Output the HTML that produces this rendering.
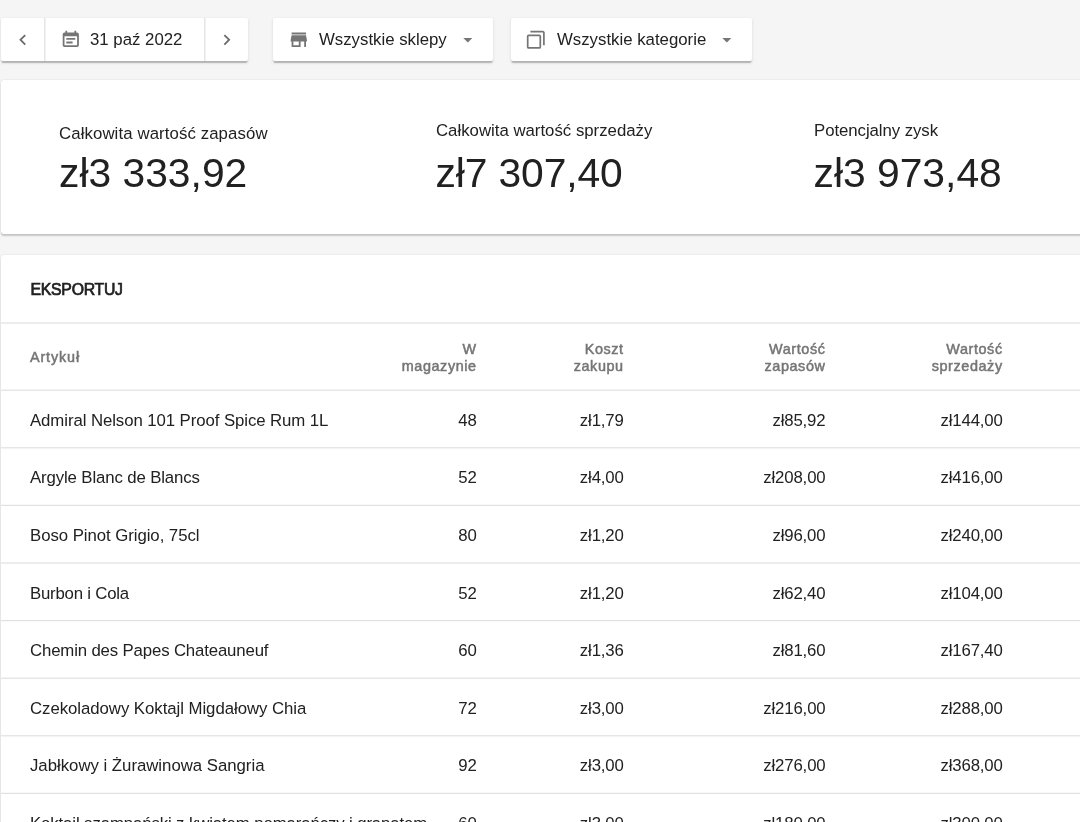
<!DOCTYPE html>
<html lang="pl">
<head>
<meta charset="utf-8">
<title>Wycena zapasów</title>
<style>
*{box-sizing:border-box;margin:0;padding:0}
html,body{width:1080px;height:822px;overflow:hidden;background:#f5f5f5}
body{font-family:"Liberation Sans",Arial,sans-serif;color:#212121;position:relative}
.btn{will-change:transform;position:absolute;top:18px;height:43.2px;background:#fff;border-radius:2px;box-shadow:0 2.4px 1.2px -1.2px rgba(0,0,0,.13),0 1.2px 1.2px 0 rgba(0,0,0,.1),0 1.2px 3.6px 0 rgba(0,0,0,.1);font-size:16.8px;white-space:nowrap}
.btn span.t{position:absolute;top:0;line-height:43px;letter-spacing:0}
.btn svg{position:absolute}
.dv{position:absolute;top:0;width:2px;height:43.2px;background:linear-gradient(to right,#e6e6e6 50%,#f2f2f2 50%)}
.card{will-change:transform;position:absolute;left:1px;width:1100px;background:#fff;border-radius:2.4px;box-shadow:0 1.2px 1.2px rgba(0,0,0,.13),0 0 1.2px rgba(0,0,0,.2),0 1.2px 3px rgba(0,0,0,.07)}
.lbl{position:absolute;font-size:16.8px;line-height:20px;white-space:nowrap}
.big{position:absolute;font-size:40.8px;line-height:48px;white-space:nowrap}
.hl{position:absolute;left:0;width:1100px;height:1px;background:#e3e3e3}
.row{position:absolute;left:0;width:1100px;height:58px;font-size:16.8px;line-height:20px}
.row span{position:absolute;top:0;white-space:nowrap}
.c1{left:29px}
.r{text-align:right}
.c2{right:624.3px}.c3{right:477.3px}.c4{right:275.5px}.c5{right:98.3px}
.td .r{letter-spacing:-0.15px}
  .td span{top:20px}
.th{color:#757575;font-size:14.4px;line-height:17.5px;-webkit-text-stroke:0.5px #757575;letter-spacing:0.6px}
</style>
</head>
<body>
<!-- date group -->
<div class="btn" style="left:1px;width:247px">
  <svg style="left:11.2px;top:10.8px" width="21.6" height="21.6" viewBox="0 0 24 24"><path fill="#6b6b6b" d="M15.41 7.41L14 6l-6 6 6 6 1.41-1.41L10.83 12z"/></svg>
  <div class="dv" style="left:43px"></div>
  <svg style="left:59.15px;top:10.8px" width="21.6" height="21.6" viewBox="0 0 24 24"><path fill="#757575" fill-rule="evenodd" d="M6 2h2v2h8V2h2v2h1a2 2 0 0 1 2 2v12a2 2 0 0 1-2 2H5a2 2 0 0 1-2-2V6a2 2 0 0 1 2-2h1z M5 8v10h14V8z M7 10h10v2H7z M7 14h7v2H7z"/></svg>
  <span class="t" style="left:89px">31 paź 2022</span>
  <div class="dv" style="left:203px"></div>
  <svg style="left:214.7px;top:10.8px" width="21.6" height="21.6" viewBox="0 0 24 24"><path fill="#6b6b6b" d="M10 6L8.59 7.41 13.17 12l-4.58 4.59L10 18l6-6z"/></svg>
</div>
<!-- shops -->
<div class="btn" style="left:273px;width:220px">
  <svg style="left:14.6px;top:10.8px" width="21.6" height="21.6" viewBox="0 0 24 24"><path fill="#757575" d="M20 4H4v2h16V4zm1 10v-2l-1-5H4l-1 5v2h1v6h10v-6h4v6h2v-6h1zm-9 4H6v-4h6v4z"/></svg>
  <span class="t" style="left:46px">Wszystkie sklepy</span>
  <svg style="left:183.55px;top:10.8px" width="21.6" height="21.6" viewBox="0 0 24 24"><path d="M7 10l5 5 5-5z" fill="#757575"/></svg>
</div>
<!-- categories -->
<div class="btn" style="left:511px;width:241px">
  <svg style="left:14.1px;top:10.8px" width="21.6" height="21.6" viewBox="0 0 24 24"><g fill="none" stroke="#757575" stroke-width="1.9"><rect x="3" y="7" width="14" height="14" rx="1.1"/><path d="M6 3H19.9a1.1 1.1 0 0 1 1.1 1.1V18"/></g></svg>
  <span class="t" style="left:46px">Wszystkie kategorie</span>
  <svg style="left:204.55px;top:10.8px" width="21.6" height="21.6" viewBox="0 0 24 24"><path d="M7 10l5 5 5-5z" fill="#757575"/></svg>
</div>

<!-- summary -->
<div class="card" style="top:80px;height:153.6px">
  <div class="lbl" style="left:58px;top:44px;letter-spacing:0.1px">Całkowita wartość zapasów</div>
  <div class="big" style="left:58px;top:69px">zł3 333,92</div>
  <div class="lbl" style="left:435px;top:41px;letter-spacing:0px">Całkowita wartość sprzedaży</div>
  <div class="big" style="left:434.5px;top:69px;letter-spacing:-0.12px">zł7 307,40</div>
  <div class="lbl" style="left:813px;top:41px;letter-spacing:-0.06px">Potencjalny zysk</div>
  <div class="big" style="left:812.5px;top:69px">zł3 973,48</div>
</div>

<!-- table -->
<div class="card" style="top:255px;height:600px">
  <div class="lbl" style="left:29.5px;top:24.7px;font-size:15.8px;-webkit-text-stroke:0.7px #212121;letter-spacing:-0.25px">EKSPORTUJ</div>
  <svg style="position:absolute;left:0;top:0" width="1100" height="600" fill="#e0e0e0"><rect x="0" y="67.4" width="1100" height="1.2"/><rect x="0" y="134.6" width="1100" height="1.2"/><rect x="0" y="192.2" width="1100" height="1.2"/><rect x="0" y="249.8" width="1100" height="1.2"/><rect x="0" y="307.4" width="1100" height="1.2"/><rect x="0" y="365.0" width="1100" height="1.2"/><rect x="0" y="422.6" width="1100" height="1.2"/><rect x="0" y="480.2" width="1100" height="1.2"/><rect x="0" y="537.8" width="1100" height="1.2"/></svg>
  <div class="row th" style="top:67px">
    <span class="c1" style="top:27px;letter-spacing:0.85px">Artykuł</span>
    <span class="r c2" style="top:18.5px">W<br>magazynie</span>
    <span class="r c3" style="top:18.5px">Koszt<br>zakupu</span>
    <span class="r c4" style="top:18.5px">Wartość<br>zapasów</span>
    <span class="r c5" style="top:18.5px">Wartość<br>sprzedaży</span>
  </div>
  <div class="row td" style="top:135.75px"><span class="c1" style="letter-spacing:-0.08px">Admiral Nelson 101 Proof Spice Rum 1L</span><span class="r c2">48</span><span class="r c3">zł1,79</span><span class="r c4">zł85,92</span><span class="r c5">zł144,00</span></div>
  <div class="row td" style="top:193.35px"><span class="c1" style="letter-spacing:-0.125px">Argyle Blanc de Blancs</span><span class="r c2">52</span><span class="r c3">zł4,00</span><span class="r c4">zł208,00</span><span class="r c5">zł416,00</span></div>
  <div class="row td" style="top:250.95px"><span class="c1" style="letter-spacing:-0.055px">Boso Pinot Grigio, 75cl</span><span class="r c2">80</span><span class="r c3">zł1,20</span><span class="r c4">zł96,00</span><span class="r c5">zł240,00</span></div>
  <div class="row td" style="top:308.55px"><span class="c1" style="letter-spacing:-0.21px">Burbon i Cola</span><span class="r c2">52</span><span class="r c3">zł1,20</span><span class="r c4">zł62,40</span><span class="r c5">zł104,00</span></div>
  <div class="row td" style="top:366.15px"><span class="c1" style="letter-spacing:-0.15px">Chemin des Papes Chateauneuf</span><span class="r c2">60</span><span class="r c3">zł1,36</span><span class="r c4">zł81,60</span><span class="r c5">zł167,40</span></div>
  <div class="row td" style="top:423.75px"><span class="c1" style="letter-spacing:-0.05px">Czekoladowy Koktajl Migdałowy Chia</span><span class="r c2">72</span><span class="r c3">zł3,00</span><span class="r c4">zł216,00</span><span class="r c5">zł288,00</span></div>
  <div class="row td" style="top:481.35px"><span class="c1" style="letter-spacing:-0.02px">Jabłkowy i Żurawinowa Sangria</span><span class="r c2">92</span><span class="r c3">zł3,00</span><span class="r c4">zł276,00</span><span class="r c5">zł368,00</span></div>
  <div class="row td" style="top:538.95px"><span class="c1" style="letter-spacing:-0.115px">Koktajl szampański z kwiatem pomarańczy i granatem</span><span class="r c2">60</span><span class="r c3">zł3,00</span><span class="r c4">zł180,00</span><span class="r c5">zł300,00</span></div>
</div>
</body>
</html>
